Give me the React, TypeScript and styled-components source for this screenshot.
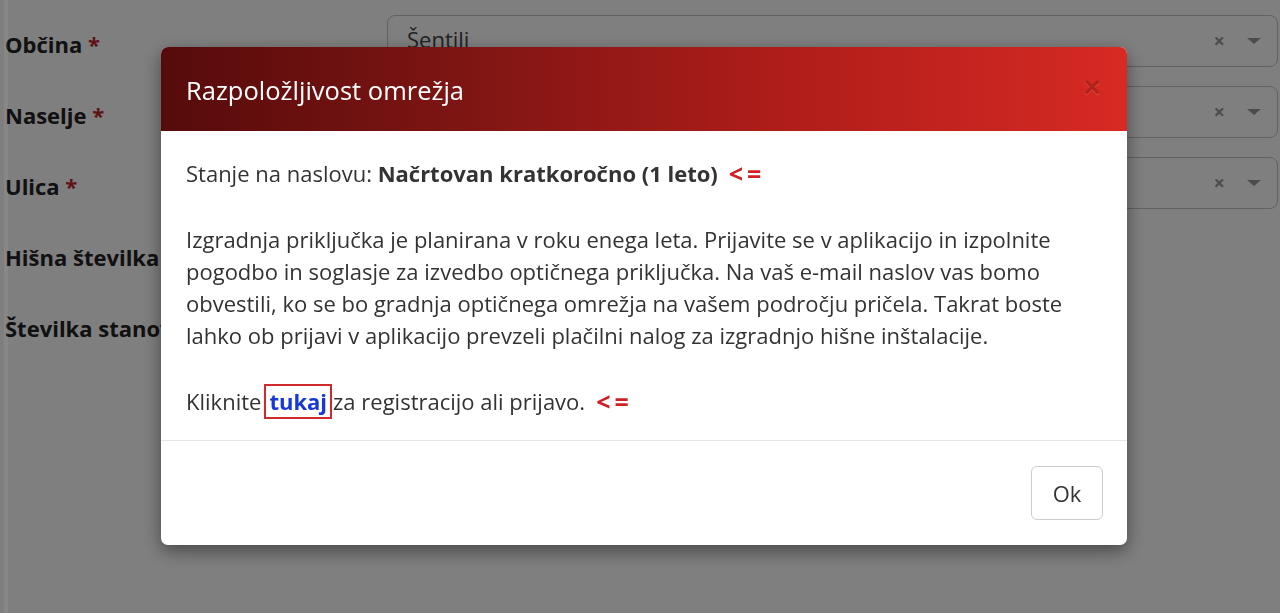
import { FC } from 'react'
import styled, { createGlobalStyle } from 'styled-components'

const GlobalStyle = createGlobalStyle`
  html, body {
    margin: 0;
    padding: 0;
    height: 100%;
    background: #fff;
    font-family: 'Open Sans', 'Liberation Sans', sans-serif;
    color: #333;
    overflow: hidden;
  }
`

interface Field {
  label: string
  required?: boolean
  value?: string
  select?: boolean
}

const fields: Field[] = [
  { label: 'Občina', required: true, value: 'Šentili', select: true },
  { label: 'Naselje', required: true, value: '', select: true },
  { label: 'Ulica', required: true, value: '', select: true },
  { label: 'Hišna številka' },
  { label: 'Številka stanovanja' }
]

const Arrow: FC = () => <ArrowMark>&lt;=</ArrowMark>

const App: FC = () => {
  return (
    <>
      <GlobalStyle />
      <Page>
        {fields.map((f) => (
          <FormRow key={f.label}>
            <Label>
              {f.label}
              {f.required && <Required> *</Required>}
            </Label>
            {f.select && (
              <SelectBox>
                <SelectValue>{f.value}</SelectValue>
                <SelectClear>×</SelectClear>
                <SelectCaret />
              </SelectBox>
            )}
          </FormRow>
        ))}
      </Page>

      <Backdrop>
        <Modal>
          <ModalHeader>
            <ModalTitle>Razpoložljivost omrežja</ModalTitle>
            <CloseButton>×</CloseButton>
          </ModalHeader>
          <ModalBody>
            <Paragraph>
              Stanje na naslovu: <strong>Načrtovan kratkoročno (1 leto)</strong>
              <Arrow />
            </Paragraph>
            <Paragraph $gap={29}>
              Izgradnja priključka je planirana v roku enega leta. Prijavite se v aplikacijo in izpolnite pogodbo in
              soglasje za izvedbo optičnega priključka. Na vaš e-mail naslov vas bomo obvestili, ko se bo gradnja
              optičnega omrežja na vašem področju pričela. Takrat boste lahko ob prijavi v aplikacijo prevzeli plačilni
              nalog za izgradnjo hišne inštalacije.
            </Paragraph>
            <Paragraph $gap={34}>
              Kliknite<HereLink href="#">tukaj</HereLink>za registracijo ali prijavo.
              <Arrow />
            </Paragraph>
          </ModalBody>
          <ModalFooter>
            <OkButton>Ok</OkButton>
          </ModalFooter>
        </Modal>
      </Backdrop>
    </>
  )
}

const Page = styled.div`
  display: flex;
  flex-direction: column;
  gap: 19px;
  padding: 15px 2px 0 5px;
`

const FormRow = styled.div`
  display: flex;
  align-items: center;
  height: 52px;
`

const Label = styled.div`
  width: 382px;
  flex-shrink: 0;
  margin-top: 6px;
  font-size: 22px;
  font-weight: 700;
  color: #222;
  white-space: nowrap;
  overflow: hidden;
`

const Required = styled.span`
  color: #c0262d;
`

const SelectBox = styled.div`
  flex: 1;
  height: 52px;
  box-sizing: border-box;
  border: 1px solid #c4c4c4;
  border-radius: 8px;
  display: flex;
  align-items: center;
  padding: 0 16px 0 19px;
  gap: 22px;
`

const SelectValue = styled.div`
  flex: 1;
  font-size: 22px;
  color: #444;
  margin-top: -4px;
`

const SelectClear = styled.span`
  font-size: 20px;
  font-weight: 700;
  color: #999;
  line-height: 1;
`

const SelectCaret = styled.span`
  width: 0;
  height: 0;
  border-left: 7px solid transparent;
  border-right: 7px solid transparent;
  border-top: 6px solid #999;
`

const Backdrop = styled.div`
  position: fixed;
  inset: 0;
  background: rgba(0, 0, 0, 0.5);
  border-left: 4px solid transparent;
  box-shadow: inset 4px 0 0 rgba(255, 255, 255, 0.06);
  display: flex;
  align-items: flex-start;
  padding: 47px 0 0 157px;
`

const Modal = styled.div`
  width: 966px;
  background: #fff;
  border-radius: 7px;
  overflow: hidden;
  box-shadow: 0 6px 18px rgba(0, 0, 0, 0.45);
`

const ModalHeader = styled.div`
  height: 84px;
  box-sizing: border-box;
  display: flex;
  align-items: center;
  justify-content: space-between;
  padding: 1px 26px 0 25px;
  background: linear-gradient(to right, #560b0b 0%, #7c1513 30%, #b01d1a 65%, #d72a23 100%);
`

const ModalTitle = styled.h4`
  margin: 0;
  font-size: 25.5px;
  font-weight: 400;
  color: #fff;
`

const CloseButton = styled.button`
  background: none;
  border: none;
  padding: 0;
  margin-top: -6px;
  font-family: 'Liberation Sans', sans-serif;
  font-size: 30px;
  font-weight: 700;
  line-height: 1;
  color: #000;
  opacity: 0.15;
  text-shadow: 0 1px 0 #fff;
  cursor: pointer;
`

const ModalBody = styled.div`
  padding: 26px 25px 23px;
  border-bottom: 1px solid #e5e5e5;
  display: flex;
  flex-direction: column;
`

const Paragraph = styled.p<{ $gap?: number }>`
  margin: 0;
  font-size: 22px;
  line-height: 32px;
  color: #333;

  & + & {
    margin-top: ${(p) => p.$gap ?? 32}px;
  }

  strong {
    font-weight: 700;
  }
`

const ArrowMark = styled.span`
  display: inline-block;
  vertical-align: top;
  height: 32px;
  margin-left: 11px;
  color: #d01f25;
  font-weight: 700;
  font-size: 25px;
  line-height: 32px;
  letter-spacing: 4px;
`

const HereLink = styled.a`
  display: inline-block;
  line-height: 31px;
  padding: 0 3px;
  margin: -2px 1px -2px 3px;
  border: 2px solid #d02a2a;
  color: #1638d9;
  font-weight: 700;
  text-decoration: none;
`

const ModalFooter = styled.div`
  display: flex;
  justify-content: flex-end;
  padding: 25px 24px 25px;
`

const OkButton = styled.button`
  height: 54px;
  width: 72px;
  background: #fff;
  border: 1px solid #ccc;
  border-radius: 6px;
  font-family: 'Open Sans', 'Liberation Sans', sans-serif;
  font-size: 22px;
  color: #333;
  cursor: pointer;
`

export default App
